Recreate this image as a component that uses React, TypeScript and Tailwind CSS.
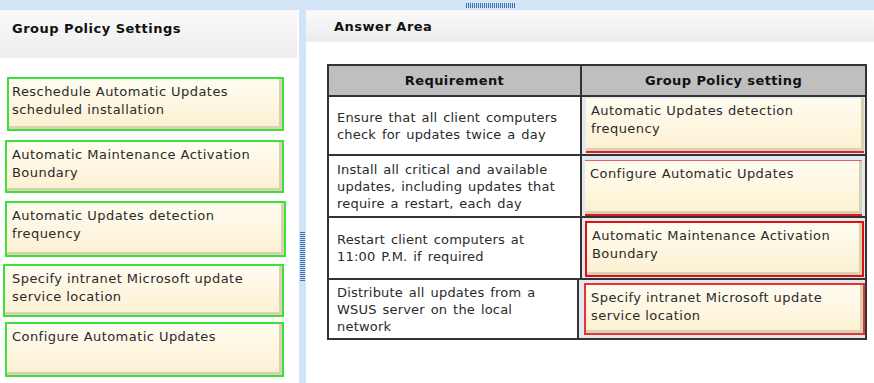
import React from "react";

type Tone = "green" | "redBottom" | "redTopBottom" | "red" | "redThin";

const font = "font-['DejaVu_Sans','Verdana',sans-serif]";

function Tile({
  text,
  tone,
  className = "",
  pad = "pl-[5px]",
}: {
  text: string[];
  tone: Tone;
  className?: string;
  pad?: string;
}) {
  const edge =
    tone === "green"
      ? "border-2 border-[#3ee03a]"
      : tone === "red"
      ? "border-2 border-[#e01010]"
      : tone === "redThin"
      ? "border-2 border-[#e43434]"
      : tone === "redBottom"
      ? "border-b-2 border-[#e02020]"
      : "border-t border-t-[#e86060] border-b-2 border-b-[#e01818]";
  return (
    <div className={`${edge} ${className}`}>
      <div
        className={`h-full bg-gradient-to-b from-[#fffcf1] to-[#fcf0d1] shadow-[inset_-3px_-3px_0_#d9d1b4] ${pad} pt-[4px] text-[13px] leading-[18px] tracking-[0.45px] text-[#2a2a2a]`}
      >
        {text.map((t) => (
          <div key={t}>{t}</div>
        ))}
      </div>
    </div>
  );
}

const choices: { text: string[]; cls: string; pad: string }[] = [
  { text: ["Reschedule Automatic Updates", "scheduled installation"], cls: "mt-[19px] ml-[7px] w-[277px] h-[54px]", pad: "pl-[3px]" },
  { text: ["Automatic Maintenance Activation", "Boundary"], cls: "mt-[9px] ml-[5px] w-[279px] h-[53px]", pad: "pl-[5px]" },
  { text: ["Automatic Updates detection", "frequency"], cls: "mt-[8px] ml-[5px] w-[281px] h-[56px]", pad: "pl-[5px]" },
  { text: ["Specify intranet Microsoft update", "service location"], cls: "mt-[7px] ml-[3px] w-[281px] h-[53px]", pad: "pl-[7px]" },
  { text: ["Configure Automatic Updates"], cls: "mt-[5px] ml-[5px] w-[279px] h-[55px]", pad: "pl-[5px]" },
];

const rows: { req: string[]; tile: string[]; tone: Tone; h: string; tileCls: string }[] = [
  {
    req: ["Ensure that all client computers", "check for updates twice a day"],
    tile: ["Automatic Updates detection", "frequency"],
    tone: "redBottom",
    h: "h-[59px]",
    tileCls: "mt-[1px] ml-[4px] w-[278px] h-[55px]",
  },
  {
    req: ["Install all critical and available", "updates, including updates that", "require a restart, each day"],
    tile: ["Configure Automatic Updates"],
    tone: "redTopBottom",
    h: "h-[62px]",
    tileCls: "mt-[4px] ml-[3px] w-[277px] h-[56px]",
  },
  {
    req: ["Restart client computers at", "11:00 P.M. if required"],
    tile: ["Automatic Maintenance Activation", "Boundary"],
    tone: "red",
    h: "h-[62px]",
    tileCls: "mt-[3px] ml-[3px] w-[279px] h-[56px]",
  },
  {
    req: ["Distribute all updates from a", "WSUS server on the local", "network"],
    tile: ["Specify intranet Microsoft update", "service location"],
    tone: "redThin",
    h: "h-[58px]",
    tileCls: "mt-[3px] ml-[5px] w-[281px] h-[52px]",
  },
];

function Grip({ vertical }: { vertical?: boolean }) {
  return (
    <div
      className={
        vertical
          ? "w-[5px] h-[50px] bg-[repeating-linear-gradient(180deg,#3d6fb0_0_1px,transparent_1px_2px)]"
          : "w-[50px] h-[5px] bg-[repeating-linear-gradient(90deg,#3d6fb0_0_1px,transparent_1px_2px)]"
      }
    />
  );
}

export default function App() {
  return (
    <div className={`relative w-[874px] h-[383px] overflow-hidden bg-white ${font}`}>
      {/* top splitter band */}
      <div className="h-[10px] bg-[#d3e4f7]" />
      <div className="absolute left-[466px] top-[3px]">
        <Grip />
      </div>

      <div className="flex h-[373px]">
        {/* choices panel */}
        <div className="w-[299px] flex flex-col">
          <div className="h-[48px] w-[297px] bg-gradient-to-b from-[#fafafa] to-[#ececec] pl-[12px] pt-[9px] text-[13px] font-bold tracking-[0.5px] text-[#111]">
            Group Policy Settings
          </div>
          <div className="flex flex-col">
            {choices.map((c) => (
              <Tile key={c.text[0]} text={c.text} tone="green" className={c.cls} pad={c.pad} />
            ))}
          </div>
        </div>

        {/* vertical splitter */}
        <div className="relative w-[7px] bg-[#d3e4f7]">
          <div className="absolute left-[1px] top-[222px]">
            <Grip vertical />
          </div>
        </div>

        {/* answer panel */}
        <div className="flex-1 flex flex-col">
          <div className="h-[32px] bg-gradient-to-b from-[#fafafa] to-[#ececec] pl-[28px] pt-[7px] text-[13px] font-bold tracking-[0.5px] text-[#111]">
            Answer Area
          </div>
          <div className="pl-[21px] pt-[22px]">
            <div className="w-[540px] border-2 border-[#333]">
              <div className="flex h-[31px] bg-[#bfbfbf] border-b-2 border-[#333] text-[13px] font-bold tracking-[0.4px] text-[#111]">
                <div className="w-[253px] border-r-2 border-[#333] flex items-center justify-center">
                  Requirement
                </div>
                <div className="flex-1 flex items-center justify-center">Group Policy setting</div>
              </div>
              {rows.map((r, i) => (
                <div
                  key={r.req[0]}
                  className={`flex ${r.h} ${i < rows.length - 1 ? "border-b-2 border-[#333]" : ""}`}
                >
                  <div className="w-[253px] border-r-2 border-[#333] pl-[8px] flex flex-col justify-center text-[13px] leading-[17px] tracking-[0.2px] [word-spacing:1.5px] text-[#2a2a2a]">
                    {r.req.map((l) => (
                      <div key={l} className="whitespace-nowrap">
                        {l}
                      </div>
                    ))}
                  </div>
                  <div className="flex-1 bg-[#e4e9f0]">
                    <Tile text={r.tile} tone={r.tone} className={r.tileCls} />
                  </div>
                </div>
              ))}
            </div>
          </div>
        </div>
      </div>
    </div>
  );
}
